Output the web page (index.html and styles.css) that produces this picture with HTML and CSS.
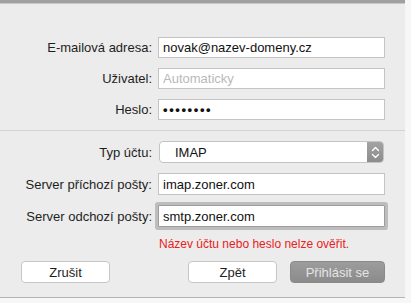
FILE: index.html
```html
<!DOCTYPE html>
<html lang="cs">
<head>
    <meta charset="UTF-8">
    <title>Přidat účet</title>
    <link rel="stylesheet" href="styles.css">
</head>
<body>

    <div class="sheet">
        <div class="form form-top">
            <span class="label">E-mailová adresa:</span>
            <div class="field">novak@nazev-domeny.cz</div>

            <span class="label">Uživatel:</span>
            <div class="field placeholder">Automaticky</div>

            <span class="label">Heslo:</span>
            <div class="field dots">••••••••</div>
        </div>

        <div class="separator"></div>

        <div class="form form-server">
            <span class="label">Typ účtu:</span>
            <div class="popup">
                <span class="popup-value">IMAP</span>
                <span class="stepper">
                    <svg width="9" height="13" viewBox="0 0 9 13">
                        <path d="M1.5 4.5 L4.5 1.5 L7.5 4.5 M1.5 8.5 L4.5 11.5 L7.5 8.5" fill="none" stroke="#fff" stroke-width="1.4" stroke-linecap="round" stroke-linejoin="round"/>
                    </svg>
                </span>
            </div>

            <span class="label">Server příchozí pošty:</span>
            <div class="field">imap.zoner.com</div>

            <span class="label">Server odchozí pošty:</span>
            <div class="field focused">smtp.zoner.com</div>

            <span></span>
            <p class="error">Název účtu nebo heslo nelze ověřit.</p>
        </div>

        <div class="actions">
            <button class="btn">Zrušit</button>
            <button class="btn btn-back">Zpět</button>
            <button class="btn btn-disabled">Přihlásit se</button>
        </div>
    </div>

</body>
</html>
```

FILE: styles.css
```css
body {
    margin: 0;
    padding: 0;
    background-color: #f7f7f7;
    font-family: 'Liberation Sans', Arial, sans-serif;
    font-size: 13px;
    color: #1e1e1e;
}

.sheet {
    width: 405px;
    height: 294px;
    background-color: #ececec;
    border-top: 3px solid #a0a0a0;
    border-bottom: 1px solid #b4b4b4;
    box-shadow: inset 0 1px 0 #c8c8c8;
    box-sizing: content-box;
}

.form {
    display: grid;
    grid-template-columns: 152px 227px;
    column-gap: 6px;
    align-items: center;
}

.form-top {
    padding-top: 34px;
    row-gap: 10px;
    grid-auto-rows: 21px;
}

.form-server {
    padding-top: 10px;
    row-gap: 10px;
    grid-template-rows: 22px 22px 22px auto;
}

.label {
    text-align: right;
    white-space: nowrap;
}

.field {
    height: 100%;
    box-sizing: border-box;
    background-color: #ffffff;
    border: 1px solid #c4c4c4;
    padding: 0 4px;
    display: flex;
    align-items: center;
    color: #111111;
}

.placeholder {
    color: #b9b9b9;
}

.dots {
    font-size: 13px;
    letter-spacing: 1.6px;
    font-weight: bold;
}

.focused {
    border-color: #9d9d9d;
    box-shadow: 0 0 0 3px #bdbdbd;
    border-radius: 1px;
}

.separator {
    height: 1px;
    margin-top: 10px;
    background-color: #d3d3d3;
}

.popup {
    height: 100%;
    width: 225px;
    margin-left: 1px;
    box-sizing: border-box;
    display: flex;
    align-items: stretch;
    background-color: #ffffff;
    border: 1px solid #c4c4c4;
    border-radius: 4px;
    overflow: hidden;
}

.popup-value {
    flex: 1;
    display: flex;
    align-items: center;
    padding-left: 15px;
    color: #111111;
}

.stepper {
    width: 16px;
    display: flex;
    align-items: center;
    justify-content: center;
    background: linear-gradient(#a3a3a3, #8c8c8c);
}

.error {
    margin: 0;
    font-size: 12px;
    line-height: 14px;
    color: #e8211c;
    padding-left: 1px;
}

.actions {
    display: flex;
    padding: 10px 20px 0 21px;
    gap: 13px;
}

.btn {
    height: 22px;
    font-family: 'Liberation Sans', Arial, sans-serif;
    font-size: 13px;
    color: #1e1e1e;
    background-color: #ffffff;
    border: 1px solid #c6c6c6;
    border-radius: 4px;
    padding: 0;
    width: 89px;
}

.btn-back {
    margin-left: auto;
}

.btn-disabled {
    width: 95px;
    color: #e4e4e4;
    border-color: #8a8a8a;
    background: linear-gradient(#9c9c9c, #8b8b8b);
}
```
